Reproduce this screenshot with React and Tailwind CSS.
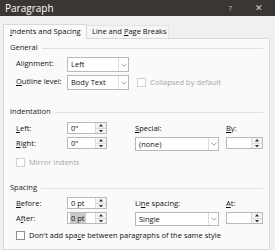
import React from 'react';

// Small drop-down box with a chevron button on its right side
const Select = ({ value, width, height = 'h-[15px]' }) => (
  <div className={`flex ${height} ${width} border border-[#b9b9b9] bg-white`}>
    <span className="flex-1 pl-[3px] leading-[13px] text-[7.5px] text-[#111]">{value}</span>
    <span className="flex w-[10px] items-center justify-center border-l border-[#dcdcdc]">
      <svg width="6" height="4" viewBox="0 0 6 4">
        <path d="M0.5 0.7 L3 3.2 L5.5 0.7" stroke="#8a8a8a" fill="none" strokeWidth="0.8" />
      </svg>
    </span>
  </div>
);

// Number box with up / down arrows
const Spinner = ({ value, width = 'w-[40px]', selected }) => (
  <div className={`flex h-[12px] ${width} border border-[#b9b9b9] bg-white`}>
    <span className="flex flex-1 items-center pl-[2px]">
      {value && (
        <span className={`px-[1px] leading-[10px] text-[7.5px] text-[#111] ${selected ? 'bg-[#c9c9c9]' : ''}`}>{value}</span>
      )}
    </span>
    <span className="flex w-[11px] flex-col border-l border-[#dcdcdc] bg-[#f3f3f3]">
      <span className="flex flex-1 items-center justify-center border-b border-[#dcdcdc]">
        <svg width="4" height="2.5" viewBox="0 0 4 2.5"><path d="M0 2.5 L2 0 L4 2.5Z" fill="#333" /></svg>
      </span>
      <span className="flex flex-1 items-center justify-center">
        <svg width="4" height="2.5" viewBox="0 0 4 2.5"><path d="M0 0 L2 2.5 L4 0Z" fill="#333" /></svg>
      </span>
    </span>
  </div>
);

const Checkbox = ({ label, disabled }) => (
  <div className="flex items-center gap-[4px]">
    <span className={`h-[9px] w-[9px] border bg-white ${disabled ? 'border-[#cfcfcf]' : 'border-[#8f8f8f]'}`} />
    <span className={`text-[7.5px] leading-[9px] ${disabled ? 'text-[#a6a6a6]' : 'text-[#111]'}`}>{label}</span>
  </div>
);

const Section = ({ title }) => (
  <div className="flex h-[12px] items-center gap-[4px] pl-[6px] pr-[6px]">
    <span className="text-[7.5px] text-[#222]">{title}</span>
    <span className="h-px flex-1 bg-[#e0e0e0]" />
  </div>
);

const Lbl = ({ children }) => <span className="text-[7.5px] leading-[12px] text-[#111]">{children}</span>;

export default function App() {
  return (
    <div className="flex h-[250px] w-[275px] flex-col overflow-hidden bg-[#f0f0f0] font-['Open_Sans',sans-serif]">
      {/* Title bar */}
      <div className="flex h-[16px] items-center bg-[#3b3631] pl-[5px] pr-[12px]">
        <span className="text-[10px] leading-[16px] text-white">Paragraph</span>
        <span className="ml-auto text-[8px] text-[#c9c5c0]">?</span>
        <span className="ml-[23px] text-[9px] text-[#d9d5d0]">✕</span>
      </div>

      {/* Tabs */}
      <div className="flex h-[22px] items-end pl-[3px]">
        <div className="relative -mb-px flex h-[15px] w-[84px] items-center border border-b-0 border-[#d9d9d9] bg-[#fafafa] pl-[6px] text-[7.5px] text-[#111]">
          <span><u>I</u>ndents and Spacing</span>
        </div>
        <div className="flex h-[13px] w-[82px] items-center border border-l-0 border-b-0 border-[#e3e3e3] bg-[#f6f6f6] pl-[5px] text-[7.5px] text-[#111]">
          <span>Line and <u>P</u>age Breaks</span>
        </div>
      </div>

      {/* Panel */}
      <div className="ml-[3px] flex w-[267px] flex-1 flex-col border border-[#d9d9d9] bg-[#fafafa] pt-[3px]">
        <Section title="General" />
        <div className="mt-[3px] grid grid-cols-[51px_auto] gap-y-[3px] pl-[12px]">
          <Lbl>Ali<u>g</u>nment:</Lbl>
          <Select value="Left" width="w-[62px]" />
          <Lbl><u>O</u>utline level:</Lbl>
          <div className="flex items-center gap-[8px]">
            <Select value="Body Text" width="w-[62px]" />
            <Checkbox label="Collapsed by default" disabled />
          </div>
        </div>

        <div className="mt-[16px]">
          <Section title="Indentation" />
        </div>
        <div className="mt-[4px] grid grid-cols-[51px_68px_91px_37px] items-start gap-y-[3px] pl-[12px]">
          <Lbl><u>L</u>eft:</Lbl>
          <Spinner value='0"' />
          <Lbl><u>S</u>pecial:</Lbl>
          <Lbl><u>B</u>y:</Lbl>
          <Lbl><u>R</u>ight:</Lbl>
          <Spinner value='0"' />
          <Select value="(none)" width="w-[84px]" height="h-[14px]" />
          <Spinner value="" width="w-[37px]" />
        </div>
        <div className="mt-[7px] pl-[12px]">
          <Checkbox label="Mirror indents" disabled />
        </div>

        <div className="mt-[15px]">
          <Section title="Spacing" />
        </div>
        <div className="mt-[3px] grid grid-cols-[51px_68px_91px_37px] items-start gap-y-[3px] pl-[12px]">
          <Lbl><u>B</u>efore:</Lbl>
          <Spinner value="0 pt" />
          <Lbl>Li<u>n</u>e spacing:</Lbl>
          <Lbl><u>A</u>t:</Lbl>
          <Lbl>A<u>f</u>ter:</Lbl>
          <Spinner value="0 pt" selected />
          <Select value="Single" width="w-[84px]" height="h-[14px]" />
          <Spinner value="" width="w-[37px]" />
        </div>
        <div className="mt-[5px] pl-[12px]">
          <Checkbox label={<span>Don't add spa<u>c</u>e between paragraphs of the same style</span>} />
        </div>
      </div>
    </div>
  );
}
